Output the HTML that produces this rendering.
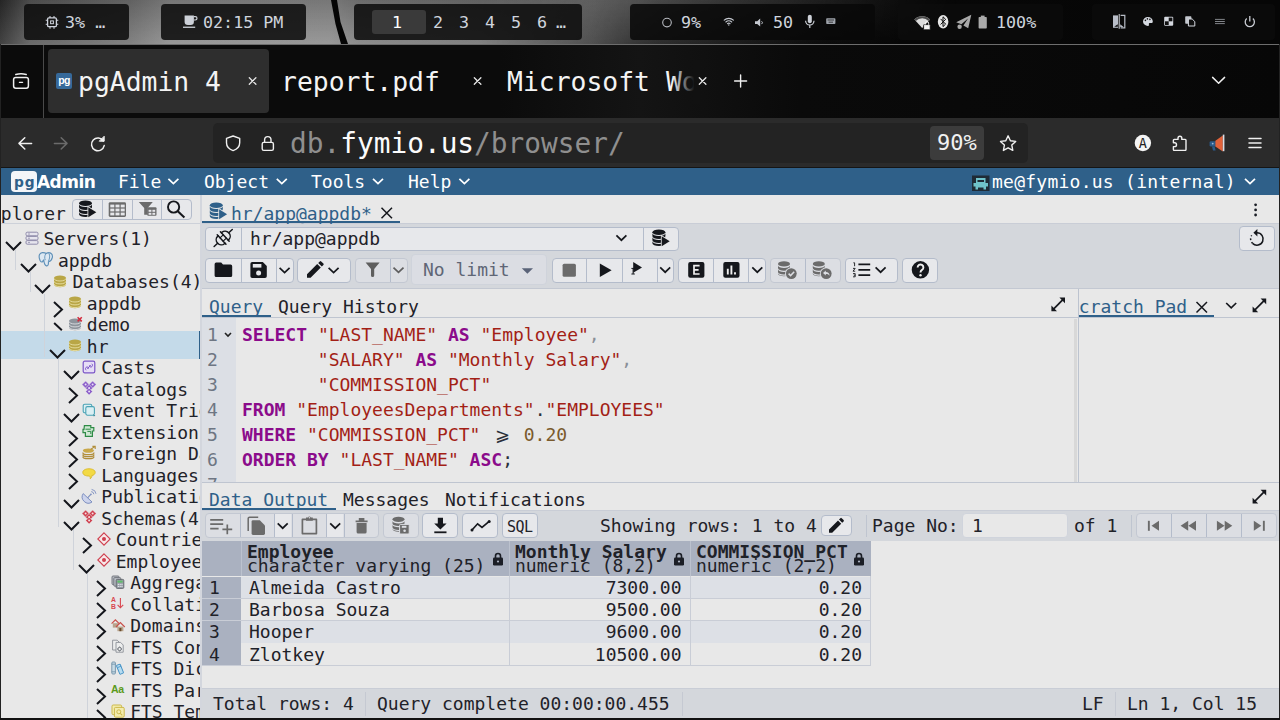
<!DOCTYPE html>
<html lang="en">
<head>
<meta charset="utf-8">
<title>pgAdmin 4</title>
<style>
*{box-sizing:border-box;margin:0;padding:0}
html,body{width:1280px;height:720px;overflow:hidden;background:#060606}
body{position:relative;font-family:"DejaVu Sans Mono","Liberation Mono",monospace;font-size:18px;color:#1f2229;-webkit-font-smoothing:antialiased}
.abs{position:absolute}
svg{display:block;overflow:visible}
.t{position:absolute;white-space:pre;line-height:1}
/* ---------- top bar ---------- */
#wall{position:absolute;left:0;top:0;width:1280px;height:44px;
 background:linear-gradient(90deg,#2c2c2c 0px,#5a5a5a 30px,#747474 130px,#8c8c8c 170px,#8e8e8e 330px,#808080 360px,#747474 480px,#5e5e5e 590px,#3c3c3c 660px,#242424 740px,#101010 820px,#070707 900px,#060606 1280px)}
#wall:before{content:"";position:absolute;left:0;top:0;width:700px;bottom:0;background:linear-gradient(180deg,rgba(0,0,0,.16),rgba(255,255,255,.10));-webkit-mask-image:linear-gradient(90deg,#000 0,#000 480px,transparent 640px);mask-image:linear-gradient(90deg,#000 0,#000 480px,transparent 640px)}
#wall:after{content:"";position:absolute;left:480px;top:0;width:480px;bottom:0;background:linear-gradient(180deg,rgba(255,255,255,.06),rgba(0,0,0,.25));-webkit-mask-image:linear-gradient(90deg,transparent 0,#000 160px,#000 340px,transparent 480px);mask-image:linear-gradient(90deg,transparent 0,#000 160px,#000 340px,transparent 480px)}
.pill{position:absolute;top:4px;height:36px;border-radius:4px;background:rgba(14,14,14,.88)}
.tb{position:absolute;white-space:pre;font-size:16.7px;line-height:20px;top:12px;color:#cfd4dd}
/* ---------- window ---------- */
#win{position:absolute;left:0;top:44px;width:1280px;height:676px;background:#0a0a0a}
#tabbar{position:absolute;left:0;top:44px;width:1280px;height:74px;background:linear-gradient(90deg,#0b0b0b 0,#0b0b0b 500px,#141414 640px,#0a0a0a 800px,#070707 1280px)}
#nav{position:absolute;left:0;top:118px;width:1280px;height:50px;background:#2b2b2b}
.tabt{position:absolute;white-space:pre;font-size:26.4px;line-height:30px;top:67px;color:#f4f4f4}
/* ---------- pgadmin ---------- */
#pgbg{position:absolute;left:1px;top:168px;width:1278px;height:550px;background:#e8e8e8}
#pghead{position:absolute;left:1px;top:168px;width:1278px;height:27px;background:#2f6089}
.menu{position:absolute;top:171px;line-height:22px;color:#fff;white-space:pre;font-size:18px}
.bar{position:absolute;background:#d4d7dc}
.hl{position:absolute;height:1px;background:#bfc5d0}
.vl{position:absolute;width:1px;background:#bfc5d0}
.grp{position:absolute;border:1px solid #b4bccb;border-radius:4px;background:#e7e8eb;overflow:hidden}
.grp i{position:absolute;top:0;bottom:0;width:1px;background:#b4bccb}
.grp.dis{background:#dcdee3;border-color:#c3c8d2}
.x{position:absolute;white-space:pre;line-height:22px;font-size:18px;color:#1f2229}
.lnk{color:#2f6089}
.ul{position:absolute;height:2px;background:#2f6089}
.ic{position:absolute}
.row{position:absolute;left:1px;width:198px;height:28px}
.guide{position:absolute;width:1px;background:#cfd3da}
.kw{color:#8b0b8b;font-weight:bold}
.st{color:#a31f16}
.nm{color:#7a5a2c}
.code{position:absolute;left:242px;white-space:pre;font-size:18px;line-height:25px;color:#2a2f3a}
.ln{position:absolute;left:207px;white-space:pre;font-size:18px;line-height:25px;color:#6e7683}
.th{position:absolute;top:541px;height:35px;background:#aab1c0}
.td{position:absolute;height:22px;white-space:pre;font-size:18px;line-height:22px;color:#1f2229;overflow:hidden}

</style>
</head>
<body>
<!-- ================= TOP BAR ================= -->
<div id="wall"></div>
<svg class="abs" style="left:326px;top:0" width="30" height="44" viewBox="0 0 30 44"><path d="M5 0 L11 0 L14.5 22 L22 44 L15 44 L9.5 24 Z" fill="#050505"/></svg>
<div class="pill" style="left:24px;width:105px"></div>
<div class="pill" style="left:161px;width:145px"></div>
<div class="pill" style="left:354px;width:228px"></div>
<div class="pill" style="left:630px;width:245px;background:rgba(8,8,8,.85)"></div>
<div class="pill" style="left:898px;width:165px;background:rgba(14,14,14,.6)"></div>
<div class="pill" style="left:1092px;width:183px;background:rgba(14,14,14,.6)"></div>
<div class="abs" style="left:372px;top:10px;width:54px;height:24px;border-radius:3px;background:#3a3a3a"></div>

<div class="tb" style="left:65px">3% …</div>
<div class="tb" style="left:203px">02:15 PM</div>
<div class="tb" style="left:392px;color:#fff">1</div>
<div class="tb" style="left:433px;word-spacing:0">2</div>
<div class="tb" style="left:459px">3</div>
<div class="tb" style="left:485px">4</div>
<div class="tb" style="left:511px">5</div>
<div class="tb" style="left:537px">6</div>
<div class="tb" style="left:556px">…</div>
<div class="tb" style="left:681px">9%</div>
<div class="tb" style="left:773px">50</div>
<div class="tb" style="left:996px">100%</div>

<!-- ================= BROWSER WINDOW ================= -->
<div id="win"></div>
<div id="tabbar"></div>
<div class="abs" style="left:0;top:44px;width:1280px;height:1px;background:#6d6d6d"></div>
<div class="abs" style="left:43px;top:45px;width:1px;height:73px;background:#4a4a4a"></div>
<div class="abs" style="left:48px;top:49px;width:221px;height:64px;border-radius:4px;background:#2e2e2e"></div>
<div class="tabt" style="left:78px">pgAdmin 4</div>
<div class="tabt" style="left:281px">report.pdf</div>
<div class="tabt" style="left:507px;width:191px;overflow:hidden">Microsoft Wor</div>
<div class="abs" style="left:672px;top:60px;width:28px;height:44px;background:linear-gradient(90deg,rgba(17,17,17,0),#111 80%)"></div>
<div id="nav"></div>
<div class="abs" style="left:213px;top:123px;width:815px;height:40px;border-radius:5px;background:#232323"></div>
<div class="abs" style="left:930px;top:126px;width:54px;height:34px;border-radius:4px;background:#3c3c3c"></div>
<div class="t" style="left:290px;top:128px;font-size:27.8px;line-height:32px;color:#8f8f8f">db.<span style="color:#fbfbfb">fymio.us</span>/browser/</div>
<div class="t" style="left:937px;top:131px;font-size:22px;line-height:24px;color:#f2f2f2">90%</div>
<div class="abs" style="left:0;top:167px;width:1280px;height:1px;background:#151515"></div>

<!-- top bar icons (page coordinates) -->
<svg class="abs" style="left:0;top:0" width="1280" height="44" viewBox="0 0 1280 44">
<g fill="none" stroke="#cfd4dd" stroke-width="1.3">
 <!-- cpu -->
 <rect x="47.6" y="17.9" width="8.8" height="8.8" rx="1.2"/>
 <rect x="50.6" y="20.9" width="2.8" height="2.8" stroke-width="1"/>
 <path d="M50 16v2M54 16v2M50 26.7v2M54 26.7v2M45.7 20.3h2M45.7 24.3h2M56.3 20.3h2M56.3 24.3h2" stroke-width="1.1"/>
</g>
<!-- coffee -->
<path d="M184.6 15.6 h9.3 v6.2 a3.3 3.3 0 0 1 -3.3 3.3 h-2.7 a3.3 3.3 0 0 1 -3.3 -3.3 Z" fill="#cdd1d8"/>
<path d="M193.9 16.6 h1.4 a1.5 1.5 0 0 1 0 3.4 h-1.4" fill="none" stroke="#cdd1d8" stroke-width="1.2"/>
<rect x="183" y="26.6" width="12.2" height="1.3" fill="#cdd1d8"/>
<!-- circle -->
<circle cx="667" cy="22.6" r="4.3" fill="none" stroke="#b9bcc2" stroke-width="1.1"/>
<!-- wifi -->
<g fill="none" stroke="#c4c8cf" stroke-width="1.1" stroke-linecap="round">
 <path d="M724.2 20.2 a6.6 6.6 0 0 1 9.2 0"/>
 <path d="M725.9 22 a4.2 4.2 0 0 1 5.8 0"/>
 <path d="M727.5 23.7 a1.9 1.9 0 0 1 2.6 0"/>
</g>
<circle cx="728.8" cy="25" r=".7" fill="#c4c8cf"/>
<!-- speaker -->
<path d="M755 21.2 h2.2 l3 -2.6 v8 l-3 -2.6 h-2.2 Z" fill="#c4c8cf"/>
<path d="M761.6 21.3 a1.8 1.8 0 0 1 0 2.8" fill="none" stroke="#c4c8cf" stroke-width="1"/>
<!-- mic -->
<rect x="807.8" y="14.8" width="4" height="8.4" rx="2" fill="#cdd1d8"/>
<path d="M805.6 20.8 a4.2 4.2 0 0 0 8.4 0 M809.8 25 v3" fill="none" stroke="#cdd1d8" stroke-width="1.2"/>
<!-- keyboard -->
<rect x="826.2" y="18.2" width="9.2" height="5.8" rx=".8" fill="#9ea3ab"/>
<path d="M827.6 20h6.4M828.6 22.2h4.4" stroke="#222" stroke-width=".8"/>
<!-- wifi lock -->
<path d="M914.4 19.6 A11 11 0 0 1 930 19.6 L922.2 28 Z" fill="#dcdcdc"/>
<path d="M914.4 19.6 A11 11 0 0 1 930 19.6 L928.6 21 A9 9 0 0 0 915.8 21 Z" fill="#4c4c4c"/>
<rect x="923.6" y="24.6" width="6.6" height="5.2" rx=".6" fill="#f4f4f4" stroke="#0a0a0a" stroke-width=".8"/>
<path d="M925.2 24.6 v-1.3 a1.7 1.7 0 0 1 3.4 0 v1.3" fill="none" stroke="#f4f4f4" stroke-width="1"/>
<!-- bluetooth -->
<ellipse cx="943.1" cy="21.8" rx="5.3" ry="6.8" fill="#e6e6e6"/>
<path d="M940.6 18.9 l5 5.2 -2.6 2.5 v-9.8 l2.6 2.5 -5 5.2" fill="none" stroke="#0a0a0a" stroke-width="1"/>
<!-- paper plane -->
<path d="M971.3 14.8 L956.2 22.2 L961.4 24.2 L968 18.4 L963.4 25.4 L968.2 28.2 Z" fill="#a9a9a9"/>
<circle cx="959.6" cy="26.8" r="2.2" fill="#a9a9a9"/>
<!-- battery -->
<rect x="978.6" y="17" width="8.2" height="11.6" rx=".8" fill="#aaa"/>
<rect x="980.8" y="15.6" width="3.8" height="1.8" fill="#aaa"/>
<!-- compare -->
<path d="M1113 15.4 h5 v12.4 h-5 Z" fill="#b9bec8"/>
<path d="M1117.8 24.2 l-3.6 2.6 h3.6 Z" fill="#0a0a0a"/>
<path d="M1120.6 15.4 h4.2 v12.4 h-4.2" fill="none" stroke="#b9bec8" stroke-width="1.2"/>
<path d="M1120.2 24.2 l3.4 2.8 h-3.4" fill="#b9bec8"/>
<path d="M1119.2 14 v14.8" stroke="#d7dae0" stroke-width="1"/>
<!-- palette -->
<path d="M1147.9 16.9 a4.9 4.5 0 1 0 0 9 c1 0 1.3 -.6 1 -1.3 c-.4 -.9 .2 -1.6 1.100 -1.600 h1.2 c1 0 1.600 -.7 1.600 -1.600 a4.9 4.5 0 0 0 -4.900 -4.500 Z" fill="#d4d8df"/>
<circle cx="1145.400" cy="20.4" r=".8" fill="#111"/><circle cx="1147.400" cy="18.9" r=".8" fill="#111"/><circle cx="1149.900" cy="19.400" r=".8" fill="#111"/>
<!-- checker -->
<rect x="1164.2" y="16.8" width="9" height="9" rx="1" fill="#d4d8df"/>
<rect x="1168.700" y="17.600" width="3.700" height="3.700" fill="#111"/>
<rect x="1165" y="21.300" width="3.700" height="3.700" fill="#111"/>
<!-- copy -->
<rect x="1185.200" y="16.200" width="6.200" height="7.600" rx=".8" fill="#c4c8cf"/>
<path d="M1188.400 19 h3.800 l2.600 2.600 v4.400 h-6.400 Z" fill="#111" stroke="#d4d8df" stroke-width="1"/>
<!-- menu -->
<path d="M1215 19.400 h9.800 M1215 21.500 h9.800 M1215 23.600 h9.800" stroke="#8f9297" stroke-width=".9"/>
<!-- power -->
<path d="M1246.700 18.600 a4.600 4.600 0 1 0 6.200 0" fill="none" stroke="#c9ccd3" stroke-width="1.300"/>
<path d="M1249.800 16 v5.400" stroke="#c9ccd3" stroke-width="1.300"/>
</svg>
<!-- browser chrome icons (page coordinates) -->
<svg class="abs" style="left:0;top:44px" width="1280" height="124" viewBox="0 44 1280 124">
<g fill="none" stroke="#f0f0f0" stroke-width="1.5" stroke-linecap="round" stroke-linejoin="round">
 <!-- firefox view -->
 <rect x="13.6" y="77.400" width="14.8" height="10.800" rx="2.2"/>
 <path d="M15.8 74.500 q5.200 -1.300 10.400 0"/>
 <path d="M19.400 82.300 h3.200" stroke-width="1.300"/>
 <!-- tab close x -->
 <path d="M249.3 77.700 l6.600 6.600 M255.9 77.700 l-6.600 6.600" stroke="#e6e6e6" stroke-width="1.300"/>
 <path d="M474.3 77.700 l6.600 6.600 M480.9 77.700 l-6.600 6.600" stroke="#e6e6e6" stroke-width="1.300"/>
 <path d="M699.3 77.700 l6.600 6.600 M705.9 77.700 l-6.600 6.600" stroke="#e6e6e6" stroke-width="1.300"/>
 <!-- new tab + -->
 <path d="M734.600 81 h12 M740.600 75 v12" stroke-width="1.400"/>
 <!-- list all tabs chevron -->
 <path d="M1212.600 77.400 l6 5.800 l6 -5.800" stroke-width="1.500"/>
 <!-- back -->
 <path d="M31.600 143.400 h-12.400 M24.800 137.800 l-5.800 5.600 l5.800 5.600"/>
 <!-- forward (disabled) -->
 <g stroke="#6b6b6b"><path d="M54.400 143.400 h12.400 M61.200 137.800 l5.800 5.600 l-5.800 5.600"/></g>
 <!-- reload -->
 <path d="M103.400 141 a6.400 6.400 0 1 0 .8 4.600"/>
 <path d="M104.200 136.600 v4.600 h-4.600 Z" fill="#f0f0f0" stroke-width="1"/>
 <!-- shield -->
 <path d="M233.100 136 l6.600 2.400 v4.400 c0 4 -3 6.600 -6.600 7.800 c-3.600 -1.200 -6.600 -3.800 -6.600 -7.800 v-4.400 Z" stroke-width="1.400"/>
 <!-- lock -->
 <rect x="262.200" y="142.400" width="11.200" height="8" rx="1.600" stroke-width="1.400"/>
 <path d="M264.600 142.400 v-2.600 a3.200 3.200 0 0 1 6.400 0 v2.600" stroke-width="1.400"/>
 <!-- star -->
 <path d="M1008.100 135.800 l2.300 4.900 5.300 .7 -3.900 3.700 1 5.300 -4.700 -2.600 -4.700 2.600 1 -5.300 -3.900 -3.700 5.300 -.7 Z" stroke-width="1.400"/>
 <!-- puzzle -->
 <path d="M1178 138.200 a1.900 1.900 0 0 1 3.800 0 v1.200 h3.400 a.8 .8 0 0 1 .8 .8 v9.400 a.8 .8 0 0 1 -.8 .8 h-11 a.8 .8 0 0 1 -.8 -.8 v-3 h1.200 a1.900 1.900 0 0 0 0 -3.800 h-1.200 v-2.600 a.8 .8 0 0 1 .8 -.8 h3.800 Z" stroke-width="1.400"/>
 <!-- hamburger -->
 <path d="M1249 138.600 h12 M1249 143 h12 M1249 147.400 h12" stroke-width="1.500"/>
</g>
<!-- favicon -->
<rect x="56" y="73" width="16" height="16" rx="2" fill="#36699a"/>
<text x="64" y="84.200" text-anchor="middle" font-family="'Liberation Sans','DejaVu Sans',sans-serif" font-weight="bold" font-size="10.500" letter-spacing="-.6" fill="#fff">pg</text>
<!-- A avatar -->
<circle cx="1142.900" cy="143" r="8.200" fill="#f4f4f4"/>
<text x="1142.900" y="148" text-anchor="middle" font-family="'DejaVu Sans Mono','Liberation Mono',monospace" font-size="13.500" fill="#222">A</text>
<!-- megaphone -->
<path d="M1211 141.200 h4.800 v5.400 h-4.800 a1.400 1.400 0 0 1 -1.400 -1.400 v-2.600 a1.400 1.400 0 0 1 1.400 -1.400 Z" fill="#2c5b8a"/>
<path d="M1212 146.400 h2.600 l1 4 h-2.600 Z" fill="#2c5b8a"/>
<path d="M1215.400 140.800 l7.400 -5.200 v16 l-7.400 -5.200 Z" fill="#e2623a"/>
<rect x="1222.800" y="134.600" width="1.600" height="16.600" fill="#d8dde6"/>
<circle cx="1212.700" cy="143.600" r=".9" fill="#9fb6d0"/>
</svg>
<!-- ================= PGADMIN ================= -->
<div id="pgbg"></div>
<div id="pghead"></div>
<!-- logo -->
<div class="abs" style="left:11px;top:171px;width:26px;height:21px;border-radius:4px;background:#f3f5f8"></div>
<div class="abs" style="left:14px;top:172px;font:bold 13.8px/20px 'DejaVu Sans','Liberation Sans',sans-serif;letter-spacing:.9px;color:#2f6089;white-space:pre">pg</div>
<div class="abs" style="left:37px;top:171px;font:bold 17px/22px 'DejaVu Sans','Liberation Sans',sans-serif;letter-spacing:-.55px;color:#fff;white-space:pre">Admin</div>
<div class="menu" style="left:118px">File</div>
<div class="menu" style="left:204px">Object</div>
<div class="menu" style="left:311px">Tools</div>
<div class="menu" style="left:408px">Help</div>
<div class="menu" style="left:992px;letter-spacing:.25px">me@fymio.us (internal)</div>

<!-- left panel -->
<div class="hl" style="left:1px;top:223px;width:200px;background:#cdd1d9"></div>
<div class="abs" style="left:1px;top:196px;width:70px;height:27px;overflow:hidden"><div class="x" style="left:-11px;top:7px">xplorer</div></div>
<div class="grp" style="left:72px;top:199px;width:120px;height:21px"><i style="left:29px"></i><i style="left:59px"></i><i style="left:88px"></i></div>
<!-- splitter -->
<div class="abs" style="left:200px;top:195px;width:2px;height:523px;background:#d3d6dd"></div>

<!-- right: query tool tab row -->
<div class="hl" style="left:202px;top:223px;width:1077px;background:#c9cdd6"></div>
<div class="ul" style="left:202px;top:221px;width:198px"></div>
<div class="x lnk" style="left:231px;top:203px">hr/app@appdb*</div>
<!-- toolbar background -->
<div class="bar" style="left:202px;top:224px;width:1077px;height:65px"></div>
<div class="hl" style="left:202px;top:288px;width:1077px;background:#c3c8d2"></div>
<!-- connection row -->
<div class="grp" style="left:205px;top:227px;width:474px;height:24px"><i style="left:35px"></i><i style="left:437px"></i></div>
<div class="x" style="left:250px;top:228px">hr/app@appdb</div>
<div class="grp" style="left:1239px;top:226px;width:36px;height:25px"></div>
<!-- main toolbar groups -->
<div class="grp" style="left:205px;top:258px;width:89px;height:25px"><i style="left:35px"></i><i style="left:70px"></i></div>
<div class="grp" style="left:297px;top:258px;width:54px;height:25px"></div>
<div class="grp dis" style="left:355px;top:258px;width:53px;height:25px"><i style="left:34px"></i></div>
<div class="abs" style="left:411px;top:254px;width:136px;height:31px;border-radius:4px;background:#dbdde3;border:1px solid #cfd3db"></div>
<div class="x" style="left:423px;top:259px;color:#5f6676">No limit</div>
<div class="grp" style="left:552px;top:258px;width:122px;height:25px"><i style="left:33px"></i><i style="left:69px"></i><i style="left:104px"></i></div>
<div class="grp" style="left:678px;top:258px;width:88px;height:25px"><i style="left:34px"></i><i style="left:69px"></i></div>
<div class="grp dis" style="left:770px;top:258px;width:71px;height:25px"><i style="left:34px"></i></div>
<div class="grp" style="left:845px;top:258px;width:53px;height:25px"></div>
<div class="grp" style="left:902px;top:258px;width:36px;height:25px"></div>

<!-- query tabs row -->
<div class="hl" style="left:202px;top:317px;width:1077px"></div>
<div class="ul" style="left:202px;top:315px;width:69px"></div>
<div class="x lnk" style="left:209px;top:296px">Query</div>
<div class="x" style="left:278px;top:296px">Query History</div>
<div class="ul" style="left:1079px;top:315px;width:135px"></div>
<div class="abs" style="left:1078px;top:290px;width:136px;height:26px;overflow:hidden"><div class="x lnk" style="left:-10px;top:6px">Scratch Pad</div></div>

<!-- editor -->
<div class="abs" style="left:202px;top:318px;width:34px;height:164px;background:#dcdfe5"></div>
<div class="vl" style="left:1078px;top:289px;height:193px;background:#bcc3cf"></div>
<div class="abs" style="left:1074px;top:319px;width:3px;height:163px;background:#d8d8d8"></div>
<div class="hl" style="left:202px;top:482px;width:1077px"></div>

<!-- bottom tabs -->
<div class="hl" style="left:202px;top:510px;width:1077px;background:#c9cdd6"></div>
<div class="ul" style="left:202px;top:508px;width:134px"></div>
<div class="x lnk" style="left:209px;top:489px">Data Output</div>
<div class="x" style="left:343px;top:489px">Messages</div>
<div class="x" style="left:445px;top:489px">Notifications</div>
<!-- data toolbar -->
<div class="bar" style="left:202px;top:511px;width:1077px;height:30px"></div>
<div class="grp dis" style="left:205px;top:513px;width:174px;height:25px"><i style="left:34px"></i><i style="left:68px"></i><i style="left:86px"></i><i style="left:120px"></i><i style="left:138px"></i></div>
<div class="grp dis" style="left:383px;top:513px;width:36px;height:25px"></div>
<div class="grp" style="left:422px;top:513px;width:36px;height:25px"></div>
<div class="grp" style="left:462px;top:513px;width:36px;height:25px"></div>
<div class="grp" style="left:502px;top:513px;width:36px;height:25px"></div>
<div class="x" style="left:507px;top:516px;font-size:15px;letter-spacing:-.5px">SQL</div>
<div class="x" style="left:600px;top:515px">Showing rows: 1 to 4</div>
<div class="grp" style="left:821px;top:515px;width:31px;height:21px"></div>
<div class="vl" style="left:866px;top:515px;height:22px"></div>
<div class="x" style="left:872px;top:515px">Page No:</div>
<div class="abs" style="left:962px;top:513px;width:106px;height:25px;border-radius:4px;background:#e8e8e8;border:1px solid #d0d4dc"></div>
<div class="x" style="left:972px;top:515px">1</div>
<div class="x" style="left:1074px;top:515px">of 1</div>
<div class="vl" style="left:1131px;top:515px;height:22px"></div>
<div class="grp dis" style="left:1136px;top:513px;width:141px;height:25px"><i style="left:34px"></i><i style="left:69px"></i><i style="left:104px"></i></div>

<!-- status bar -->
<div class="bar" style="left:202px;top:688px;width:1077px;height:30px"></div>
<div class="hl" style="left:202px;top:688px;width:1077px;background:#c9cdd6"></div>
<div class="vl" style="left:365px;top:692px;height:24px;background:#c5c9d2"></div>
<div class="vl" style="left:682px;top:692px;height:24px;background:#c5c9d2"></div>
<div class="vl" style="left:1115px;top:692px;height:24px;background:#c5c9d2"></div>
<div class="x" style="left:213px;top:693px">Total rows: 4</div>
<div class="x" style="left:377px;top:693px">Query complete 00:00:00.455</div>
<div class="x" style="left:1082px;top:693px">LF</div>
<div class="x" style="left:1127px;top:693px">Ln 1, Col 15</div>
<!-- tree -->
<div class="abs" style="left:1px;top:224px;width:199px;height:494px;overflow:hidden">
<div class="abs" style="left:0;top:107px;width:198px;height:28px;background:#c4dae9"></div>
<div class="abs" style="left:198px;top:107px;width:2px;height:28px;background:#2f6089"></div>
<div class="guide" style="left:14px;top:26px;height:20px"></div>
<div class="guide" style="left:29px;top:48px;height:20px"></div>
<div class="guide" style="left:43px;top:70px;height:63px"></div>
<div class="guide" style="left:57px;top:134px;height:169px"></div>
<div class="guide" style="left:72px;top:304px;height:42px"></div>
<div class="guide" style="left:86px;top:348px;height:148px"></div>
<svg class="ic" style="left:4.3px;top:17.2px" width="17" height="10" viewBox="0 0 17 10"><path d="M1 1 L8.5 8.5 L16 1" fill="none" stroke="#14161c" stroke-width="2"/></svg>
<div class="x" style="left:42.5px;top:4.1px">Servers(1)</div>
<svg class="ic" style="left:23.5px;top:6.7px" width="14" height="14" viewBox="0 0 14 14"><g fill="#e6e5ee" stroke="#8f8baa" stroke-width="1"><rect x="1" y="1.200" width="12" height="3.600" rx="1.200"/><rect x="1" y="5.400" width="12" height="3.600" rx="1.200"/><rect x="1" y="9.600" width="12" height="3.600" rx="1.200"/></g><path d="M3 3 h2 M3 7.200 h2 M3 11.400 h2" stroke="#8f8baa" stroke-width=".8"/></svg>
<svg class="ic" style="left:18.75px;top:38.7px" width="17" height="10" viewBox="0 0 17 10"><path d="M1 1 L8.5 8.5 L16 1" fill="none" stroke="#14161c" stroke-width="2"/></svg>
<div class="x" style="left:56.95px;top:25.6px">appdb</div>
<svg class="ic" style="left:37.95px;top:28.2px" width="14" height="14" viewBox="0 0 14 14"><g transform="translate(-1 -1.200) scale(1.140)"><path d="M3.800 1.600 c-2.400 .2 -3.200 2.400 -2.600 5 c.4 1.800 1.400 3.400 2.400 3.200 c.8 -.2 .6 -1.400 1.400 -1.800 c.2 1.800 .6 4.600 2.400 5.200 c1.600 .4 1.800 -1.600 1.800 -3.600 c1.600 -.4 3 -1.800 3.400 -3.800 c.4 -2.200 -.8 -4 -3 -4.200 c-1 0 -1.800 .4 -2.400 .8 c-.8 -.6 -2 -.9 -3.400 -.8 Z" fill="#dde8f2" stroke="#5f90b8" stroke-width="1"/><path d="M6.800 2.600 c-1 1.600 -1.200 3.800 -.4 5.600 M9.600 2.400 c1 1.600 .8 4.200 -.4 6.600" fill="none" stroke="#5f90b8" stroke-width=".8"/></g></svg>
<svg class="ic" style="left:33.2px;top:60.2px" width="17" height="10" viewBox="0 0 17 10"><path d="M1 1 L8.5 8.5 L16 1" fill="none" stroke="#14161c" stroke-width="2"/></svg>
<div class="x" style="left:71.4px;top:47.1px">Databases(4)</div>
<svg class="ic" style="left:52.4px;top:49.7px" width="14" height="14" viewBox="0 0 14 14"><path d="M1 4 a6 2.600 0 0 1 12 0 v6.600 a6 2.600 0 0 1 -12 0 Z" fill="#b9a646"/><path d="M1 4.400 a6 2.600 0 0 0 12 0 M1 7.300 a6 2.600 0 0 0 12 0 M1 10 a6 2.600 0 0 0 12 0" fill="none" stroke="#efe7b0" stroke-width=".8"/></svg>
<svg class="ic" style="left:52.05px;top:76.8px" width="10" height="17" viewBox="0 0 10 17"><path d="M1 1 L9 8.5 L1 16" fill="none" stroke="#14161c" stroke-width="2"/></svg>
<div class="x" style="left:85.85px;top:68.6px">appdb</div>
<svg class="ic" style="left:66.85px;top:71.2px" width="14" height="14" viewBox="0 0 14 14"><path d="M1 4 a6 2.600 0 0 1 12 0 v6.600 a6 2.600 0 0 1 -12 0 Z" fill="#b9a646"/><path d="M1 4.400 a6 2.600 0 0 0 12 0 M1 7.300 a6 2.600 0 0 0 12 0 M1 10 a6 2.600 0 0 0 12 0" fill="none" stroke="#efe7b0" stroke-width=".8"/></svg>
<svg class="ic" style="overflow:hidden;left:52.05px;top:98.3px" width="10" height="8.7" viewBox="0 0 10 9"><path d="M1 1 L9 8.5" fill="none" stroke="#14161c" stroke-width="2"/></svg>
<div class="x" style="left:85.85px;top:90.1px">demo</div>
<svg class="ic" style="left:66.85px;top:92.7px" width="14" height="14" viewBox="0 0 14 14"><path d="M1 4 a6 2.600 0 0 1 12 0 v6.600 a6 2.600 0 0 1 -12 0 Z" fill="#8e949c"/><path d="M1 4.400 a6 2.600 0 0 0 12 0 M1 7.300 a6 2.600 0 0 0 12 0 M1 10 a6 2.600 0 0 0 12 0" fill="none" stroke="#e4e6ea" stroke-width=".8"/><path d="M9.600 .2 l4.200 4.200 M13.800 .2 l-4.200 4.200" stroke="#d32a3c" stroke-width="1.500"/></svg>
<svg class="ic" style="left:47.65px;top:124.7px" width="17" height="10" viewBox="0 0 17 10"><path d="M1 1 L8.5 8.5 L16 1" fill="none" stroke="#14161c" stroke-width="2"/></svg>
<div class="x" style="left:85.85px;top:111.6px">hr</div>
<svg class="ic" style="left:66.85px;top:114.2px" width="14" height="14" viewBox="0 0 14 14"><path d="M1 4 a6 2.600 0 0 1 12 0 v6.600 a6 2.600 0 0 1 -12 0 Z" fill="#b9a646"/><path d="M1 4.400 a6 2.600 0 0 0 12 0 M1 7.300 a6 2.600 0 0 0 12 0 M1 10 a6 2.600 0 0 0 12 0" fill="none" stroke="#efe7b0" stroke-width=".8"/></svg>
<svg class="ic" style="left:62.1px;top:146.2px" width="17" height="10" viewBox="0 0 17 10"><path d="M1 1 L8.5 8.5 L16 1" fill="none" stroke="#14161c" stroke-width="2"/></svg>
<div class="x" style="left:100.3px;top:133.1px">Casts</div>
<svg class="ic" style="left:81.3px;top:135.7px" width="14" height="14" viewBox="0 0 14 14"><rect x="1.200" y="1.200" width="11.600" height="11.600" rx="1.600" fill="#e6def6" stroke="#7b55c7" stroke-width="1.200"/><path d="M4.200 10.200 c-1.200 -1 -.8 -2.800 .6 -3.200 c1.200 -.2 1.800 .8 1.400 1.800 M9.800 3.800 c1.200 1 .8 2.800 -.6 3.200 c-1.200 .2 -1.800 -.8 -1.400 -1.800 M5.400 8.800 l3.200 -3.600" fill="none" stroke="#7b55c7" stroke-width="1"/></svg>
<svg class="ic" style="left:66.5px;top:162.8px" width="10" height="17" viewBox="0 0 10 17"><path d="M1 1 L9 8.5 L1 16" fill="none" stroke="#14161c" stroke-width="2"/></svg>
<div class="x" style="left:100.3px;top:154.6px">Catalogs</div>
<svg class="ic" style="left:81.3px;top:157.2px" width="14" height="14" viewBox="0 0 14 14"><g fill="#8a5cc9" stroke="#e8e8e8" stroke-width=".5"><path d="M3.600 0 l3.600 3.600 l-3.600 3.600 l-3.600 -3.600 Z"/><path d="M10.600 0 l3.600 3.600 l-3.600 3.600 l-3.600 -3.600 Z"/><path d="M7.100 3.500 l3.600 3.600 l-3.600 3.600 l-3.600 -3.600 Z"/><path d="M7.100 7.200 l3.400 3.400 l-3.400 3.400 l-3.400 -3.400 Z"/></g><g fill="#e9e0f8"><circle cx="3.600" cy="3.600" r="1"/><circle cx="10.600" cy="3.600" r="1"/><circle cx="7.100" cy="7.100" r="1"/><circle cx="7.100" cy="10.600" r="1"/></g></svg>
<svg class="ic" style="left:62.1px;top:189.2px" width="17" height="10" viewBox="0 0 17 10"><path d="M1 1 L8.5 8.5 L16 1" fill="none" stroke="#14161c" stroke-width="2"/></svg>
<div class="x" style="left:100.3px;top:176.1px">Event Triggers</div>
<svg class="ic" style="left:81.3px;top:178.7px" width="14" height="14" viewBox="0 0 14 14"><rect x="1.200" y="1.200" width="8.600" height="8.600" rx="1.600" fill="#dbeff3" stroke="#4aa3b5" stroke-width="1.100"/><rect x="3.800" y="3.600" width="8.600" height="8.600" rx="1.600" fill="#dbeff3" stroke="#4aa3b5" stroke-width="1.100"/><path d="M11 11.400 l2.400 1 l-1.600 1.200 Z" fill="#2c7f91"/></svg>
<svg class="ic" style="left:66.5px;top:205.8px" width="10" height="17" viewBox="0 0 10 17"><path d="M1 1 L9 8.5 L1 16" fill="none" stroke="#14161c" stroke-width="2"/></svg>
<div class="x" style="left:100.3px;top:197.6px">Extensions</div>
<svg class="ic" style="left:81.3px;top:200.2px" width="14" height="14" viewBox="0 0 14 14"><path d="M2.400 1.600 h6.400 v2 h3 v3.400 h-1.400 v5.400 h-7 v-3.800 h-2.400 v-3.200 h1 Z" fill="#cfe8d4" stroke="#2e8b46" stroke-width="1.200"/><path d="M3.400 5.200 h5.400 M5.400 7.400 h3.400 v2.600" fill="none" stroke="#2e8b46" stroke-width="1"/></svg>
<svg class="ic" style="left:66.5px;top:227.3px" width="10" height="17" viewBox="0 0 10 17"><path d="M1 1 L9 8.5 L1 16" fill="none" stroke="#14161c" stroke-width="2"/></svg>
<div class="x" style="left:100.3px;top:219.1px">Foreign Data Wrappers</div>
<svg class="ic" style="left:81.3px;top:221.7px" width="14" height="14" viewBox="0 0 14 14"><ellipse cx="6.400" cy="4.600" rx="5.600" ry="2.200" fill="#c9a84a"/><path d="M.8 6.400 a5.600 2.200 0 0 0 11.200 0 M.8 8.400 a5.600 2.200 0 0 0 11.200 0 M.8 10.400 a5.600 2.200 0 0 0 11.200 0" fill="none" stroke="#b08d3a" stroke-width="1.300"/><path d="M8.600 3.400 l4 -2.600 M10.400 .4 h2.800 v2.600" fill="none" stroke="#b08d3a" stroke-width="1.100"/></svg>
<svg class="ic" style="left:66.5px;top:248.8px" width="10" height="17" viewBox="0 0 10 17"><path d="M1 1 L9 8.5 L1 16" fill="none" stroke="#14161c" stroke-width="2"/></svg>
<div class="x" style="left:100.3px;top:240.6px">Languages</div>
<svg class="ic" style="left:81.3px;top:243.2px" width="14" height="14" viewBox="0 0 14 14"><path d="M7 1.800 c3.600 0 6.200 1.400 6.200 3.600 c0 1.600 -1.400 2.800 -3.400 3.200 c.2 1.200 -.4 2.400 -1.600 3.200 c.2 -1 0 -2 -.8 -2.800 c-3.800 .2 -6.600 -1.200 -6.600 -3.600 c0 -2.200 2.600 -3.600 6.200 -3.600 Z" fill="#f3da45" stroke="#d8b82c" stroke-width=".9"/></svg>
<svg class="ic" style="left:62.1px;top:275.2px" width="17" height="10" viewBox="0 0 17 10"><path d="M1 1 L8.5 8.5 L16 1" fill="none" stroke="#14161c" stroke-width="2"/></svg>
<div class="x" style="left:100.3px;top:262.1px">Publications</div>
<svg class="ic" style="left:81.3px;top:264.7px" width="14" height="14" viewBox="0 0 14 14"><path d="M1.200 4.600 A6.200 6.200 0 0 0 10 13 Z" fill="#cdd4ec" stroke="#7d8fc0" stroke-width="1"/><path d="M5.600 8.800 l3 -3.200" stroke="#7d8fc0" stroke-width="1.100"/><circle cx="8.900" cy="5.300" r=".9" fill="#7d8fc0"/><path d="M9.200 2.600 a2.800 2.800 0 0 1 2.600 2.600 M9.600 .4 a5 5 0 0 1 4.400 4.400" fill="none" stroke="#7d8fc0" stroke-width=".9"/></svg>
<svg class="ic" style="left:62.1px;top:296.7px" width="17" height="10" viewBox="0 0 17 10"><path d="M1 1 L8.5 8.5 L16 1" fill="none" stroke="#14161c" stroke-width="2"/></svg>
<div class="x" style="left:100.3px;top:283.6px">Schemas(4)</div>
<svg class="ic" style="left:81.3px;top:286.2px" width="14" height="14" viewBox="0 0 14 14"><g fill="#cf3f4e" stroke="#e8e8e8" stroke-width=".5"><path d="M3.600 0 l3.600 3.600 l-3.600 3.600 l-3.600 -3.600 Z"/><path d="M10.600 0 l3.600 3.600 l-3.600 3.600 l-3.600 -3.600 Z"/><path d="M7.100 3.500 l3.600 3.600 l-3.600 3.600 l-3.600 -3.600 Z"/><path d="M7.100 7.200 l3.400 3.400 l-3.400 3.400 l-3.400 -3.400 Z"/></g><g fill="#f6dfe1"><circle cx="3.600" cy="3.600" r="1"/><circle cx="10.600" cy="3.600" r="1"/><circle cx="7.100" cy="7.100" r="1"/><circle cx="7.100" cy="10.600" r="1"/></g></svg>
<svg class="ic" style="left:80.95px;top:313.3px" width="10" height="17" viewBox="0 0 10 17"><path d="M1 1 L9 8.5 L1 16" fill="none" stroke="#14161c" stroke-width="2"/></svg>
<div class="x" style="left:114.75px;top:305.1px">Countries</div>
<svg class="ic" style="left:95.75px;top:307.7px" width="14" height="14" viewBox="0 0 14 14"><path d="M7 .8 l6.200 6.200 l-6.200 6.200 l-6.200 -6.200 Z" fill="#f7e9ea" stroke="#cf3f4e" stroke-width="1.100"/><circle cx="7" cy="7" r="2" fill="#cf3f4e"/></svg>
<svg class="ic" style="left:76.55px;top:339.7px" width="17" height="10" viewBox="0 0 17 10"><path d="M1 1 L8.5 8.5 L16 1" fill="none" stroke="#14161c" stroke-width="2"/></svg>
<div class="x" style="left:114.75px;top:326.6px">Employees Departments</div>
<svg class="ic" style="left:95.75px;top:329.2px" width="14" height="14" viewBox="0 0 14 14"><path d="M7 .8 l6.200 6.200 l-6.200 6.200 l-6.200 -6.200 Z" fill="#f7e9ea" stroke="#cf3f4e" stroke-width="1.100"/><circle cx="7" cy="7" r="2" fill="#cf3f4e"/></svg>
<svg class="ic" style="left:95.4px;top:356.3px" width="10" height="17" viewBox="0 0 10 17"><path d="M1 1 L9 8.5 L1 16" fill="none" stroke="#14161c" stroke-width="2"/></svg>
<div class="x" style="left:129.2px;top:348.1px">Aggregates</div>
<svg class="ic" style="left:110.2px;top:350.7px" width="14" height="14" viewBox="0 0 14 14"><rect x="1" y="1" width="7" height="8.600" rx="1" fill="#b9bdc4" stroke="#6d7178" stroke-width=".9"/><rect x="2.800" y="2.600" width="7" height="8.600" rx="1" fill="#b9bdc4" stroke="#6d7178" stroke-width=".9"/><rect x="5.200" y="4.400" width="7.600" height="9" rx="1" fill="#9aa0a8" stroke="#5f646b" stroke-width=".9"/><rect x="6.400" y="5.600" width="5.200" height="2" fill="#5fbf6a"/><path d="M6.800 9.400 h1.200 M8.600 9.400 h1.200 M10.400 9.400 h1.200 M6.800 11.400 h1.200 M8.600 11.400 h1.200 M10.400 11.400 h1.200" stroke="#e8eaee" stroke-width="1"/></svg>
<svg class="ic" style="left:95.4px;top:377.8px" width="10" height="17" viewBox="0 0 10 17"><path d="M1 1 L9 8.5 L1 16" fill="none" stroke="#14161c" stroke-width="2"/></svg>
<div class="x" style="left:129.2px;top:369.6px">Collations</div>
<svg class="ic" style="left:110.2px;top:372.2px" width="14" height="14" viewBox="0 0 14 14"><text x="0" y="6" font-family="'Liberation Sans','DejaVu Sans',sans-serif" font-size="6.800" font-weight="bold" fill="#d9464f">A</text><text x="0" y="13.200" font-family="'Liberation Sans','DejaVu Sans',sans-serif" font-size="6.800" font-weight="bold" fill="#d9464f">B</text><path d="M9.400 2 v9.600 M6.600 8.800 l2.800 3 l2.800 -3" fill="none" stroke="#d9464f" stroke-width="1.100"/></svg>
<svg class="ic" style="left:95.4px;top:399.3px" width="10" height="17" viewBox="0 0 10 17"><path d="M1 1 L9 8.5 L1 16" fill="none" stroke="#14161c" stroke-width="2"/></svg>
<div class="x" style="left:129.2px;top:391.1px">Domains</div>
<svg class="ic" style="left:110.2px;top:393.7px" width="14" height="14" viewBox="0 0 14 14"><path d="M.6 5.600 l3.800 -3.800 l3.800 3.800" fill="none" stroke="#c9504a" stroke-width="1.200"/><rect x="1.800" y="5.200" width="5.200" height="4.400" fill="#b7a38c"/><path d="M5 9 l4.400 -4.400 l4.400 4.400" fill="none" stroke="#c9504a" stroke-width="1.200"/><rect x="6.400" y="8.600" width="6" height="4.600" fill="#b7a38c"/><rect x="8.400" y="10" width="2" height="3.200" fill="#6a4a2a"/></svg>
<svg class="ic" style="left:95.4px;top:420.8px" width="10" height="17" viewBox="0 0 10 17"><path d="M1 1 L9 8.5 L1 16" fill="none" stroke="#14161c" stroke-width="2"/></svg>
<div class="x" style="left:129.2px;top:412.6px">FTS Configurations</div>
<svg class="ic" style="left:110.2px;top:415.2px" width="14" height="14" viewBox="0 0 14 14"><path d="M1.600 1.200 h4.600 l2 2 v7.800 h-6.600 Z" fill="#eceded" stroke="#8b8f96" stroke-width=".9"/><path d="M5 3.400 h4.600 l2.600 2.600 v7.200 h-7.200 Z" fill="#eceded" stroke="#8b8f96" stroke-width=".9"/><circle cx="8.600" cy="10" r="1.700" fill="none" stroke="#6d7178" stroke-width="1"/><path d="M8.600 7.600 v.8 M8.600 11.600 v.8 M6.200 10 h.8 M10.200 10 h.8" stroke="#6d7178" stroke-width=".9"/></svg>
<svg class="ic" style="left:95.4px;top:442.3px" width="10" height="17" viewBox="0 0 10 17"><path d="M1 1 L9 8.5 L1 16" fill="none" stroke="#14161c" stroke-width="2"/></svg>
<div class="x" style="left:129.2px;top:434.1px">FTS Dictionaries</div>
<svg class="ic" style="left:110.2px;top:436.7px" width="14" height="14" viewBox="0 0 14 14"><rect x=".8" y="1" width="3.600" height="12" rx="1" fill="#c8dbe6" stroke="#6f8fa6" stroke-width=".9"/><path d="M.8 3.200 h3.600 M.8 10.800 h3.600" stroke="#6f8fa6" stroke-width=".8"/><rect x="7" y="3.400" width="4" height="9.600" rx=".8" fill="#b7dcf0" stroke="#3f8fc4" stroke-width=".9" transform="rotate(-22 9 8.200)"/><path d="M6.600 6.600 l3.600 -1.500" stroke="#3f8fc4" stroke-width=".8"/></svg>
<svg class="ic" style="left:95.4px;top:463.8px" width="10" height="17" viewBox="0 0 10 17"><path d="M1 1 L9 8.5 L1 16" fill="none" stroke="#14161c" stroke-width="2"/></svg>
<div class="x" style="left:129.2px;top:455.6px">FTS Parsers</div>
<svg class="ic" style="left:110.2px;top:458.2px" width="14" height="14" viewBox="0 0 14 14"><text x="0" y="11.400" font-family="'Liberation Sans','DejaVu Sans',sans-serif" font-size="10.500" font-weight="bold" fill="#5b9a1c" letter-spacing="-.3">Aa</text></svg>
<svg class="ic" style="left:95.4px;top:485.3px" width="10" height="17" viewBox="0 0 10 17"><path d="M1 1 L9 8.5 L1 16" fill="none" stroke="#14161c" stroke-width="2"/></svg>
<div class="x" style="left:129.2px;top:477.1px">FTS Templates</div>
<svg class="ic" style="left:110.2px;top:479.7px" width="14" height="14" viewBox="0 0 14 14"><rect x="1" y="1" width="9.600" height="9.600" rx="1.200" fill="#f3ecae" stroke="#cdb94a" stroke-width="1"/><rect x="3.400" y="3.400" width="9.800" height="9.800" rx="1.200" fill="#f3ecae" stroke="#cdb94a" stroke-width="1"/><circle cx="7.800" cy="7.800" r="2" fill="none" stroke="#cdb94a" stroke-width="1"/><path d="M9.300 9.300 l2 2" stroke="#cdb94a" stroke-width="1.100"/></svg>
</div>
<!-- code -->
<div class="abs" style="left:202px;top:318px;width:873px;height:164px;overflow:hidden">
<div class="ln" style="left:5px;top:3.5px">1</div>
<div class="code" style="left:40px;top:3.5px"><span class="kw">SELECT</span> <span class="st">"LAST_NAME"</span> <span class="kw">AS</span> <span class="st">"Employee"</span><span style="color:#8a8f98">,</span></div>
<div class="ln" style="left:5px;top:28.6px">2</div>
<div class="code" style="left:40px;top:28.6px">       <span class="st">"SALARY"</span> <span class="kw">AS</span> <span class="st">"Monthly Salary"</span><span style="color:#8a8f98">,</span></div>
<div class="ln" style="left:5px;top:53.7px">3</div>
<div class="code" style="left:40px;top:53.7px">       <span class="st">"COMMISSION_PCT"</span></div>
<div class="ln" style="left:5px;top:78.8px">4</div>
<div class="code" style="left:40px;top:78.8px"><span class="kw">FROM</span> <span class="st">"EmployeesDepartments"</span>.<span class="st">"EMPLOYEES"</span></div>
<div class="ln" style="left:5px;top:103.9px">5</div>
<div class="code" style="left:40px;top:103.9px"><span class="kw">WHERE</span> <span class="st">"COMMISSION_PCT"</span> <span style="display:inline-block;width:21.67px;text-align:center">⩾</span> <span class="nm">0.20</span></div>
<div class="ln" style="left:5px;top:129px">6</div>
<div class="code" style="left:40px;top:129px"><span class="kw">ORDER BY</span> <span class="st">"LAST_NAME"</span> <span class="kw">ASC</span>;</div>
<div class="ln" style="left:5px;top:154.1px">7</div>
<div class="code" style="left:40px;top:154.1px"></div>
<svg class="ic" style="left:22px;top:14px" width="8" height="6" viewBox="0 0 8 6"><path d="M1 1 L4 4 L7 1" fill="none" stroke="#222" stroke-width="1.6"/></svg>
</div>
<!-- table -->
<div class="th" style="left:202px;width:669px"></div>
<div class="vl" style="left:241px;top:541px;height:35px;background:#bcc2ce"></div>
<div class="vl" style="left:509px;top:541px;height:35px;background:#bcc2ce"></div>
<div class="vl" style="left:690px;top:541px;height:35px;background:#bcc2ce"></div>
<div class="x" style="left:247px;top:541px;font-weight:bold">Employee</div>
<div class="x" style="left:247px;top:555px">character varying (25)</div>
<svg class="ic" style="left:492px;top:552px" width="12" height="14" viewBox="0 0 12 14"><rect x="1" y="5.5" width="10" height="8" rx="1.2" fill="#1b1e26"/><path d="M3.5 6 V4 a2.5 2.5 0 0 1 5 0 V6" fill="none" stroke="#1b1e26" stroke-width="1.6"/><circle cx="6" cy="9.5" r="1.1" fill="#aab1c0"/></svg>
<div class="x" style="left:515px;top:541px;font-weight:bold">Monthly Salary</div>
<div class="x" style="left:515px;top:555px">numeric (8,2)</div>
<svg class="ic" style="left:673px;top:552px" width="12" height="14" viewBox="0 0 12 14"><rect x="1" y="5.5" width="10" height="8" rx="1.2" fill="#1b1e26"/><path d="M3.5 6 V4 a2.5 2.5 0 0 1 5 0 V6" fill="none" stroke="#1b1e26" stroke-width="1.6"/><circle cx="6" cy="9.5" r="1.1" fill="#aab1c0"/></svg>
<div class="x" style="left:696px;top:541px;font-weight:bold">COMMISSION_PCT</div>
<div class="x" style="left:696px;top:555px">numeric (2,2)</div>
<svg class="ic" style="left:853px;top:552px" width="12" height="14" viewBox="0 0 12 14"><rect x="1" y="5.5" width="10" height="8" rx="1.2" fill="#1b1e26"/><path d="M3.5 6 V4 a2.5 2.5 0 0 1 5 0 V6" fill="none" stroke="#1b1e26" stroke-width="1.6"/><circle cx="6" cy="9.5" r="1.1" fill="#aab1c0"/></svg>
<div class="abs" style="left:241px;top:576.5px;width:630px;height:22.2px;background:#dde0e6"></div>
<div class="abs" style="left:202px;top:576.5px;width:39px;height:22.2px;background:#aab1c0"></div>
<div class="hl" style="left:202px;top:598.1px;width:669px;background:#c9cdd6"></div>
<div class="td" style="left:209px;top:577px">1</div>
<div class="td" style="left:249px;top:577px">Almeida Castro</div>
<div class="td" style="left:509px;width:172.5px;text-align:right;top:577px">7300.00</div>
<div class="td" style="left:690px;width:172px;text-align:right;top:577px">0.20</div>
<div class="abs" style="left:241px;top:598.7px;width:630px;height:22.2px;background:#e8e8e8"></div>
<div class="abs" style="left:202px;top:598.7px;width:39px;height:22.2px;background:#aab1c0"></div>
<div class="hl" style="left:202px;top:620.3px;width:669px;background:#c9cdd6"></div>
<div class="td" style="left:209px;top:599.2px">2</div>
<div class="td" style="left:249px;top:599.2px">Barbosa Souza</div>
<div class="td" style="left:509px;width:172.5px;text-align:right;top:599.2px">9500.00</div>
<div class="td" style="left:690px;width:172px;text-align:right;top:599.2px">0.20</div>
<div class="abs" style="left:241px;top:620.9px;width:630px;height:22.2px;background:#dde0e6"></div>
<div class="abs" style="left:202px;top:620.9px;width:39px;height:22.2px;background:#aab1c0"></div>
<div class="hl" style="left:202px;top:642.5px;width:669px;background:#c9cdd6"></div>
<div class="td" style="left:209px;top:621.4px">3</div>
<div class="td" style="left:249px;top:621.4px">Hooper</div>
<div class="td" style="left:509px;width:172.5px;text-align:right;top:621.4px">9600.00</div>
<div class="td" style="left:690px;width:172px;text-align:right;top:621.4px">0.20</div>
<div class="abs" style="left:241px;top:643.1px;width:630px;height:22.2px;background:#e8e8e8"></div>
<div class="abs" style="left:202px;top:643.1px;width:39px;height:22.2px;background:#aab1c0"></div>
<div class="hl" style="left:202px;top:664.7px;width:669px;background:#c9cdd6"></div>
<div class="td" style="left:209px;top:643.6px">4</div>
<div class="td" style="left:249px;top:643.6px">Zlotkey</div>
<div class="td" style="left:509px;width:172.5px;text-align:right;top:643.6px">10500.00</div>
<div class="td" style="left:690px;width:172px;text-align:right;top:643.6px">0.20</div>
<div class="vl" style="left:509px;top:576px;height:89px;background:#c9cdd6"></div>
<div class="vl" style="left:690px;top:576px;height:89px;background:#c9cdd6"></div>
<div class="vl" style="left:870px;top:576px;height:89px;background:#c9cdd6"></div>
<!-- pgAdmin icons (page coordinates) -->
<svg class="abs" style="left:0;top:168px" width="1280" height="552" viewBox="0 168 1280 552">
<defs>
 <!-- database cylinder stack 0..12 wide, 0..14 tall -->
 <g id="dbs">
  <ellipse cx="6" cy="2.600" rx="6" ry="2.600"/>
  <path d="M0 4.200 a6 2.600 0 0 0 12 0 v2.600 a6 2.600 0 0 1 -12 0 Z"/>
  <path d="M0 8 a6 2.600 0 0 0 12 0 v2.600 a6 2.600 0 0 1 -12 0 Z"/>
  <path d="M0 11.800 a6 2.600 0 0 0 12 0 v.6 a6 2.600 0 0 1 -12 0 Z"/>
 </g>
 <g id="dbplay">
  <ellipse cx="6.500" cy="2.800" rx="6.500" ry="2.800"/>
  <path d="M0 3.900 a6.500 2.800 0 0 0 13 0 v2.900 a6.500 2.800 0 0 1 -13 0 Z"/>
  <path d="M0 7.900 a6.500 2.800 0 0 0 13 0 v2.900 a6.500 2.800 0 0 1 -13 0 Z"/>
  <path d="M0 11.900 a6.500 2.800 0 0 0 13 0 v2 a6.500 2.800 0 0 1 -13 0 Z"/>
  <path d="M9.300 6.800 l8 5 l-8 5 Z" stroke="#e8e8e8" stroke-width="1.600" stroke-linejoin="miter"/>
  <path d="M9.300 6.800 l8 5 l-8 5 Z"/>
 </g>
 <path id="chev" d="M0 0 l5 4.800 l5 -4.800" fill="none" stroke-width="1.700"/>
</defs>
<!-- header menu chevrons -->
<g stroke="#fff"><use href="#chev" x="168.400" y="178.800"/><use href="#chev" x="276.800" y="178.800"/><use href="#chev" x="373" y="178.800"/><use href="#chev" x="459.400" y="178.800"/><use href="#chev" x="1245" y="178.800"/></g>
<!-- avatar -->
<rect x="972" y="175.500" width="17.500" height="15.500" fill="#1f2b36"/>
<path d="M976 178 h9.500 v5 h2.500 v3.500 h-2 v3 h-2.500 v-2 h-5.500 v2 h-2.500 v-3 h-2 v-3.500 h2.500 Z" fill="#6fc2ca"/>
<rect x="977.500" y="180" width="6.500" height="2" fill="#1f2b36"/>
<!-- kebab -->
<g fill="#1b1e26"><circle cx="1255.600" cy="204.800" r="1.400"/><circle cx="1255.600" cy="209.900" r="1.400"/><circle cx="1255.600" cy="215" r="1.400"/></g>

<!-- explorer header buttons -->
<use href="#dbplay" x="79" y="200.400" fill="#15171c" transform="translate(0 0)"/>
<g fill="#6b6b6b">
 <rect x="108.700" y="202.200" width="17.300" height="14.700" rx="1.400"/>
</g>
<g fill="#e6e7ea">
 <rect x="110.300" y="204.600" width="4" height="2.800"/><rect x="115.500" y="204.600" width="4" height="2.800"/><rect x="120.700" y="204.600" width="4" height="2.800"/>
 <rect x="110.300" y="208.600" width="4" height="2.800"/><rect x="115.500" y="208.600" width="4" height="2.800"/><rect x="120.700" y="208.600" width="4" height="2.800"/>
 <rect x="110.300" y="212.600" width="4" height="2.800"/><rect x="115.500" y="212.600" width="4" height="2.800"/><rect x="120.700" y="212.600" width="4" height="2.800"/>
</g>
<path d="M138.800 202 h14 l-5.200 6 v6.800 h-3.400 v-6.800 Z" fill="#6b6b6b"/>
<rect x="147.200" y="207.200" width="9.300" height="8.600" rx="1" fill="#6b6b6b"/>
<g fill="#e6e7ea"><rect x="148.600" y="209.800" width="2.800" height="2"/><rect x="152.400" y="209.800" width="2.800" height="2"/><rect x="148.600" y="212.800" width="2.800" height="2"/><rect x="152.400" y="212.800" width="2.800" height="2"/></g>
<circle cx="173.600" cy="207" r="5.600" fill="none" stroke="#15171c" stroke-width="1.900"/>
<path d="M177.800 211.200 l6.600 6.200" stroke="#15171c" stroke-width="2.100"/>

<!-- query tool tab icon + close -->
<use href="#dbplay" x="209.800" y="202.400" fill="#2f6089"/>
<path d="M381.500 207.800 l10.500 10.500 M392 207.800 l-10.500 10.500" stroke="#15171c" stroke-width="1.500"/>

<!-- connection row -->
<g transform="translate(223.200 238) rotate(-43)" fill="none" stroke="#15171c" stroke-width="1.500" stroke-linecap="round">
 <path d="M-12.400 0 H-7.600"/>
 <path d="M-2.200 -5 H-3 a4.600 5 0 0 0 0 10 H-2.200"/>
 <path d="M-2.200 -6.400 V6.400"/>
 <path d="M2.200 -5 H3 a4.600 5 0 0 1 0 10 H2.200"/>
 <path d="M2.200 -6.400 V6.400"/>
 <path d="M7.600 0 H12.400"/>
 <path d="M-2.200 -2.300 H2.200 M-2.200 2.300 H2.200" stroke-width="1.200"/>
</g>
<g stroke="#15171c"><use href="#chev" x="616.400" y="235.400"/></g>
<use href="#dbplay" x="652.400" y="229.400" fill="#15171c"/>
<!-- reset layout -->
<g fill="none" stroke="#15171c" stroke-width="1.500">
 <path d="M1257 232.800 a6.200 6.200 0 1 1 -4.400 10.600"/>
 <path d="M1252.600 243.400 a6.200 6.200 0 0 1 -.9 -8" stroke-dasharray="1.600 2.200"/>
</g>
<path d="M1257.400 229 l-4 3.800 l4 3.800 Z" fill="#15171c"/>

<!-- main toolbar -->
<path d="M214.600 264.200 a1.600 1.600 0 0 1 1.600 -1.600 h5 l1.800 2 h7.600 a1.600 1.600 0 0 1 1.600 1.600 v9.200 a1.600 1.600 0 0 1 -1.600 1.600 h-14.400 a1.600 1.600 0 0 1 -1.600 -1.600 Z" fill="#15171c"/>
<path d="M250.400 263.800 a1.800 1.800 0 0 1 1.800 -1.800 h10.600 l4 4 v10.200 a1.800 1.800 0 0 1 -1.800 1.800 h-12.800 a1.800 1.800 0 0 1 -1.800 -1.800 Z" fill="#15171c"/>
<rect x="252.800" y="264" width="8.600" height="3.600" fill="#e7e8eb"/>
<circle cx="258.600" cy="273" r="2.500" fill="#e7e8eb"/>
<g stroke="#15171c"><use href="#chev" x="279.600" y="267.800"/><use href="#chev" x="328.600" y="267.800"/></g>
<path d="M307 277.800 v-3.600 l10.200 -10.200 l3.600 3.600 l-10.200 10.200 Z M318.200 263 l1.600 -1.600 a1 1 0 0 1 1.400 0 l2.200 2.200 a1 1 0 0 1 0 1.400 l-1.600 1.600 Z" fill="#15171c"/>
<path d="M365.600 262.400 h14 l-5.400 6.600 v6.400 a1.600 1.600 0 0 1 -3.200 0 v-6.400 Z" fill="#5e5e5e"/>
<g stroke="#5e5e5e"><use href="#chev" x="393.500" y="267.600"/></g>
<path d="M521.800 268.200 h11.200 l-5.600 5.600 Z" fill="#5a6378"/>
<rect x="562.600" y="263.700" width="13.300" height="13.100" rx="1.600" fill="#6b6b6b"/>
<path d="M599.800 263.600 l11.800 6.700 l-11.800 6.700 Z" fill="#15171c"/>
<path d="M633.200 262 l8.800 5.400 l-8.800 5.400 Z" fill="#15171c"/>
<path d="M631.400 268.400 h3.400 M633.100 268.400 v5.600 M631.400 274 h3.400" stroke="#15171c" stroke-width="1"/>
<g stroke="#15171c"><use href="#chev" x="660.200" y="267.400"/><use href="#chev" x="752.300" y="267.400"/><use href="#chev" x="875.600" y="267.400"/></g>
<rect x="688.200" y="261.900" width="16.200" height="15.800" rx="2" fill="#15171c"/>
<path d="M699.600 265.600 h-5.600 v8.400 h5.600 M694 269.800 h4.600" fill="none" stroke="#f0f0f0" stroke-width="1.700"/>
<rect x="723.300" y="261.900" width="16.200" height="15.800" rx="2" fill="#15171c"/>
<path d="M727.800 268.800 v5.600 M731.400 265.400 v9 M735 272.200 v2.200" stroke="#f0f0f0" stroke-width="1.900"/>
<!-- commit / rollback -->
<g fill="#6b6b6b">
 <use href="#dbs" x="778" y="261.300" transform="translate(0 0)"/>
 <use href="#dbs" x="812.800" y="261.300"/>
</g>
<circle cx="791.300" cy="273.600" r="6.300" fill="#dcdee3"/><circle cx="791.300" cy="273.600" r="5.400" fill="#6b6b6b"/>
<path d="M788.600 273.600 l2 2 l3.600 -3.800" fill="none" stroke="#dcdee3" stroke-width="1.500"/>
<circle cx="826.200" cy="273.600" r="6.300" fill="#dcdee3"/><circle cx="826.200" cy="273.600" r="5.400" fill="#6b6b6b"/>
<path d="M823 273 l2.800 -2.600 v1.600 c2.400 0 3.600 1.200 3.800 3.800 c-1 -1.400 -2 -1.800 -3.800 -1.800 v1.600 Z" fill="#dcdee3"/>
<!-- list -->
<path d="M858.400 264.400 h11.800 M858.400 269.800 h11.800 M858.400 275.200 h11.800" stroke="#15171c" stroke-width="1.700"/>
<path d="M853.400 262.800 h1.200 v3.400 M853 268.400 h2.200 l-2.200 2.800 h2.200 M853 273.600 h2.200 v3.200 h-2.200 M853.800 275.200 h1.400" fill="none" stroke="#15171c" stroke-width=".9"/>
<!-- help -->
<circle cx="920.400" cy="269.800" r="8.700" fill="#15171c"/>
<path d="M917.600 267.400 a2.900 2.900 0 1 1 4.400 2.500 c-1.100 .7 -1.500 1.300 -1.500 2.500" fill="none" stroke="#f0f0f0" stroke-width="1.900"/>
<circle cx="920.500" cy="275.300" r="1.200" fill="#f0f0f0"/>

<!-- expand arrows -->
<g id="exp" stroke="#15171c" stroke-width="1.700" fill="#15171c">
 <path d="M1053 309.600 l10.400 -10.400" fill="none"/>
 <path d="M1059.400 297.600 h5.600 v5.600 Z M1051.400 305.600 v5.600 h5.600 Z" stroke="none"/>
</g>
<use href="#exp" x="201.200" y="1"/>
<use href="#exp" x="201.200" y="192.200"/>
<g stroke="#15171c"><use href="#chev" x="1226.200" y="303"/></g>
<path d="M1196.500 302 l10.500 10.500 M1207 302 l-10.500 10.500" stroke="#15171c" stroke-width="1.500"/>

<!-- data toolbar -->
<rect x="275" y="514" width="16" height="23" fill="#e7e8eb"/><rect x="327" y="514" width="16" height="23" fill="#e7e8eb"/>
<g fill="none" stroke="#6b6b6b" stroke-width="1.700">
 <path d="M210.200 519.800 h13 M210.200 524.200 h13 M210.200 528.600 h8.400"/>
 <path d="M222.400 529.400 h9.800 M227.300 524.500 v9.800"/>
 <path d="M248.200 531 v-12.400 a1.400 1.400 0 0 1 1.400 -1.400 h8.600" stroke-width="1.500"/>
 <path d="M302.400 519.400 h14 v14.200 h-14 Z" stroke-linejoin="round"/>
</g>
<path d="M251.600 521.600 a1.400 1.400 0 0 1 1.400 -1.400 h6.800 l5.200 5.200 v8.200 a1.400 1.400 0 0 1 -1.400 1.400 h-10.600 a1.400 1.400 0 0 1 -1.400 -1.400 Z" fill="#6b6b6b"/>
<path d="M306 517.400 h2 a1.500 1.500 0 0 1 2.800 0 h2 v3.400 h-6.800 Z" fill="#6b6b6b"/>
<circle cx="309.400" cy="517.800" r=".7" fill="#dcdee3"/>
<g stroke="#15171c"><use href="#chev" x="277.700" y="523.400"/><use href="#chev" x="330.200" y="523.400"/></g>
<path d="M355.600 520.400 h12 v1.800 h-12 Z M358.800 518 h5.600 v2.400 h-5.600 Z M356.600 523 h10 v9 a1.600 1.600 0 0 1 -1.600 1.600 h-6.800 a1.600 1.600 0 0 1 -1.600 -1.600 Z" fill="#6b6b6b"/>
<g fill="#6b6b6b"><use href="#dbs" x="392.500" y="516.700"/></g>
<rect x="399.600" y="524.400" width="9.600" height="9.600" rx="1" fill="#6b6b6b" stroke="#dcdee3" stroke-width="1"/>
<rect x="401.800" y="525.800" width="4.600" height="2" fill="#dcdee3"/><circle cx="404.600" cy="530.800" r="1.300" fill="#dcdee3"/>
<path d="M437.800 517.800 h5.200 v5.600 h3.600 l-6.200 6.200 l-6.200 -6.200 h3.600 Z" fill="#15171c"/>
<rect x="434.300" y="531.400" width="12.200" height="1.800" fill="#15171c"/>
<path d="M472 530 l5.600 -6.200 l4.400 3.600 l7.200 -6" fill="none" stroke="#15171c" stroke-width="1.700"/>
<circle cx="472" cy="530" r="1.500" fill="#15171c"/><circle cx="489.200" cy="521.400" r="1.500" fill="#15171c"/>
<!-- pencil small -->
<path d="M829 532.800 v-3.200 l9 -9 l3.200 3.200 l-9 9 Z M839 519.600 l1.400 -1.400 a.9 .9 0 0 1 1.300 0 l1.900 1.900 a.9 .9 0 0 1 0 1.300 l-1.400 1.400 Z" fill="#15171c"/>
<!-- pagination -->
<g fill="#6b6b6b">
 <rect x="1147.900" y="520.800" width="1.900" height="10"/><path d="M1159 520.800 v10 l-7.500 -5 Z"/>
 <path d="M1188.200 520.800 v10 l-7.600 -5 Z M1196 520.800 v10 l-7.600 -5 Z"/>
 <path d="M1216.900 520.800 v10 l7.600 -5 Z M1224.700 520.800 v10 l7.600 -5 Z"/>
 <path d="M1253.800 520.800 v10 l7.500 -5 Z"/><rect x="1262.900" y="520.800" width="1.900" height="10"/>
</g>
</svg>
<!-- window frame -->
<div class="abs" style="left:0;top:44px;width:1px;height:676px;background:#222"></div>
<div class="abs" style="left:1279px;top:44px;width:1px;height:676px;background:#222"></div>
<div class="abs" style="left:0;top:718px;width:1280px;height:2px;background:#111"></div>
</body>
</html>
